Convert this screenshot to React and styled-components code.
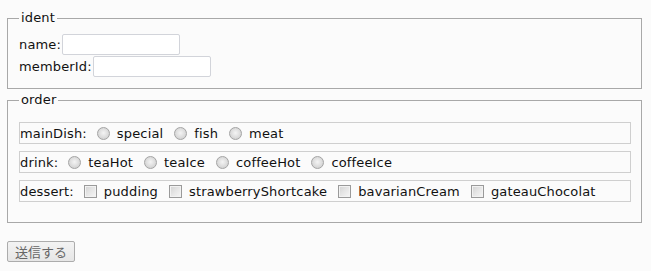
import React from "react";
import styled, { createGlobalStyle } from "styled-components";

const GlobalStyle = createGlobalStyle`
  html, body {
    margin: 0;
    padding: 0;
    background: #fbfbfb;
  }
  body {
    font-family: "DejaVu Sans", "Noto Sans CJK JP", sans-serif;
    font-size: 13px;
    letter-spacing: 0.15px;
    color: #111;
  }
`;

const Page = styled.form`
  padding: 10px 0 0 7px;
  width: 635px;
`;

const FieldSet = styled.fieldset`
  margin: 0 0 ${(p) => p.$gap || 0}px 0;
  padding: ${(p) => p.$pt}px 10px ${(p) => p.$pb}px 11px;
  border: 1px solid #a8a8a8;
  min-inline-size: 0;
  box-sizing: border-box;
  width: 635px;
`;

const Legend = styled.legend`
  padding: 0 2px;
  line-height: 16px;
  font-size: 13px;
`;

const FieldRow = styled.div`
  display: flex;
  align-items: center;
  height: 22px;
`;

const TextInput = styled.input`
  width: 118px;
  height: 21px;
  box-sizing: border-box;
  margin: 0 0 0 1px;
  border: 1px solid #d2d4da;
  border-radius: 2px;
  background: #fff;
  padding: 0 2px;
  font: inherit;
`;

const GroupBox = styled.div`
  display: flex;
  align-items: center;
  height: 22px;
  box-sizing: border-box;
  border: 1px solid #cfcfcf;
  margin-bottom: ${(p) => (p.$last ? 0 : 7)}px;
`;

const GroupLabel = styled.span`
  margin-right: 10px;
`;

const Option = styled.label`
  display: flex;
  align-items: center;
  margin-right: 11px;
`;

const Radio = styled.input.attrs({ type: "radio" })`
  appearance: none;
  margin: 0 7px 0 0;
  width: 13px;
  height: 13px;
  border-radius: 50%;
  border: 1px solid #a4a4a4;
  box-sizing: border-box;
  background: radial-gradient(circle at 50% 45%, #f4f4f4 0%, #dcdcdc 55%, #c8c8c8 100%);
`;

const Check = styled.input.attrs({ type: "checkbox" })`
  appearance: none;
  margin: 0 7px 0 0;
  width: 13px;
  height: 13px;
  border: 1px solid #9a9a9a;
  box-sizing: border-box;
  background: linear-gradient(135deg, #d2d2d2 0%, #e6e6e6 50%, #f6f6f6 100%);
  box-shadow: inset 0 0 0 1px #f2f2f2;
`;

const SubmitButton = styled.button`
  margin-top: 18px;
  width: 68px;
  height: 21px;
  padding: 0;
  border: 1px solid #acacac;
  border-radius: 2px;
  background: linear-gradient(#f3f3f3, #e6e6e6);
  color: #666;
  font-family: "Noto Sans CJK JP", sans-serif;
  font-size: 13px;
  line-height: 19px;
`;

const dishes = ["special", "fish", "meat"];
const drinks = ["teaHot", "teaIce", "coffeeHot", "coffeeIce"];
const desserts = ["pudding", "strawberryShortcake", "bavarianCream", "gateauChocolat"];

export default function App() {
  return (
    <>
      <GlobalStyle />
      <Page onSubmit={(e) => e.preventDefault()}>
        <FieldSet $pt={7} $pb={11} $gap={3}>
          <Legend>ident</Legend>
          <FieldRow>
            <span>name:</span>
            <TextInput name="name" />
          </FieldRow>
          <FieldRow>
            <span>memberId:</span>
            <TextInput name="memberId" />
          </FieldRow>
        </FieldSet>
        <FieldSet $pt={14} $pb={20}>
          <Legend>order</Legend>
          <GroupBox>
            <GroupLabel>mainDish:</GroupLabel>
            {dishes.map((d) => (
              <Option key={d}>
                <Radio name="mainDish" value={d} />
                {d}
              </Option>
            ))}
          </GroupBox>
          <GroupBox>
            <GroupLabel>drink:</GroupLabel>
            {drinks.map((d) => (
              <Option key={d}>
                <Radio name="drink" value={d} />
                {d}
              </Option>
            ))}
          </GroupBox>
          <GroupBox $last>
            <GroupLabel>dessert:</GroupLabel>
            {desserts.map((d) => (
              <Option key={d}>
                <Check name="dessert" value={d} />
                {d}
              </Option>
            ))}
          </GroupBox>
        </FieldSet>
        <SubmitButton type="submit">送信する</SubmitButton>
      </Page>
    </>
  );
}
